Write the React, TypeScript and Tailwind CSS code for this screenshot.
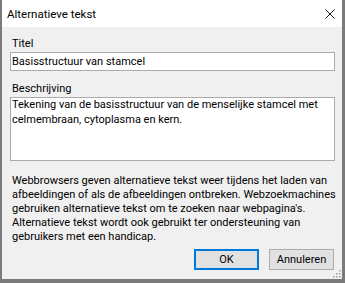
import React from "react";

export default function App() {
  const font = { fontFamily: 'Roboto, "Noto Sans", sans-serif' };
  return (
    <div className="w-[345px] h-[283px] bg-[#7b7b7b] pl-[2px] pr-[3px] pb-[4px]" style={font}>
      <div className="flex flex-col h-full bg-[#f0f0f0] text-[11px] text-black leading-[14px] relative">
        <div className="h-[27px] shrink-0 bg-white flex items-center justify-between pl-[5px] pr-[7px]">
          <span className="text-[11.5px] pt-[1px]">Alternatieve tekst</span>
          <svg width="10" height="10" viewBox="0 0 10 10">
            <path d="M0.5 0.5 L9.5 9.5 M9.5 0.5 L0.5 9.5" stroke="#1a1a1a" strokeWidth="1" fill="none" />
          </svg>
        </div>
        <div className="pl-[8px] pr-[7px] pt-[10px] flex flex-col">
          <label className="pl-[2px] h-[14px]">Titel</label>
          <div className="mt-[1px] h-[19px] border border-[#ababab] bg-white px-[1px] flex items-center">
            Basisstructuur van stamcel
          </div>
          <label className="pl-[2px] mt-[11px] h-[14px]">Beschrijving</label>
          <div className="mt-[1px] h-[64px] border border-[#ababab] bg-white px-[1px] leading-[14.5px] whitespace-nowrap">
            Tekening van de basisstructuur van de menselijke stamcel met<br />
            celmembraan, cytoplasma en kern.
          </div>
          <p className="mt-[13px] pl-[2px] leading-[14px] whitespace-nowrap">
            Webbrowsers geven alternatieve tekst weer tijdens het laden van<br />
            afbeeldingen of als de afbeeldingen ontbreken. Webzoekmachines<br />
            gebruiken alternatieve tekst om te zoeken naar webpagina's.<br />
            Alternatieve tekst wordt ook gebruikt ter ondersteuning van<br />
            gebruikers met een handicap.
          </p>
          <div className="flex justify-end gap-[10px] mt-[5px] pr-[1px]">
            <button className="w-[65px] h-[21px] bg-[#e1e1e1] border-2 border-[#0078d7] flex items-center justify-center text-[11px]">OK</button>
            <button className="w-[65px] h-[21px] bg-[#e1e1e1] border border-[#adadad] flex items-center justify-center text-[11px]">Annuleren</button>
          </div>
        </div>
        <svg width="8" height="8" viewBox="0 0 8 8" className="absolute right-[1px] bottom-[1px]">
          <rect x="6" y="0" width="1.5" height="1.5" fill="#a0a0a0" />
          <rect x="3" y="3" width="1.5" height="1.5" fill="#a0a0a0" />
          <rect x="6" y="3" width="1.5" height="1.5" fill="#a0a0a0" />
          <rect x="0" y="6" width="1.5" height="1.5" fill="#a0a0a0" />
          <rect x="3" y="6" width="1.5" height="1.5" fill="#a0a0a0" />
          <rect x="6" y="6" width="1.5" height="1.5" fill="#a0a0a0" />
        </svg>
      </div>
    </div>
  );
}
